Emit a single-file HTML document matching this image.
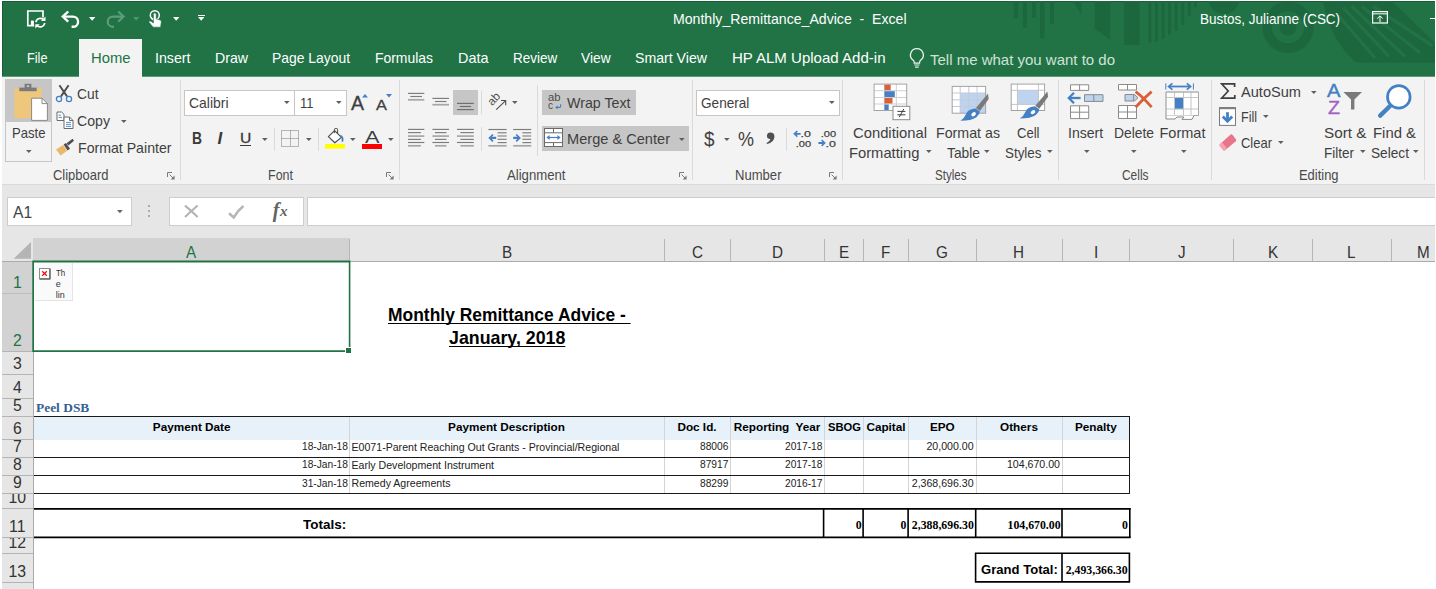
<!DOCTYPE html>
<html><head><meta charset="utf-8"><title>Monthly_Remittance_Advice - Excel</title><style>
html,body{margin:0;padding:0;background:#fff;}
body{width:1436px;height:589px;overflow:hidden;position:relative;font-family:"Liberation Sans",sans-serif;}
.b{position:absolute;display:block;}
.t{position:absolute;white-space:pre;line-height:1;transform-origin:0 0;display:block;}
</style></head>
<body>
<div class="b" style="left:2px;top:1px;width:1433px;height:75px;background:#217346;"></div>
<div class="b" style="left:2px;top:1px;width:1433px;height:1px;background:#1a5c38;"></div>
<div class="b" style="left:2px;top:1px;width:1px;height:75px;background:#1a5c38;"></div>
<div class="b" style="left:79px;top:39px;width:62.5px;height:37px;background:#f3f3f3;"></div>
<div class="b" style="left:2px;top:76px;width:1433px;height:109px;background:#f3f3f3;"></div>
<div class="b" style="left:2px;top:184px;width:1433px;height:1px;background:#dadada;"></div>
<div class="b" style="left:2px;top:76px;width:77px;height:1px;background:#5e987a;"></div>
<div class="b" style="left:142px;top:76px;width:1293px;height:1px;background:#5e987a;"></div>
<div class="b" style="left:2px;top:185px;width:1433px;height:53.3px;background:#e6e6e6;"></div>
<div class="b" style="left:2px;top:239px;width:1433px;height:350px;background:#ffffff;"></div>
<div class="b" style="left:2px;top:238.3px;width:1433px;height:22.7px;background:#e6e6e6;"></div>
<div class="b" style="left:2px;top:239px;width:31.5px;height:350px;background:#e6e6e6;"></div>
<div class="b" style="left:2px;top:261px;width:1433px;height:1px;background:#ababab;"></div>
<div class="b" style="left:33px;top:239px;width:1px;height:350px;background:#ababab;"></div>
<div class="b" style="left:7px;top:197px;width:124.8px;height:28.6px;background:#fff;box-sizing:border-box;border:1px solid #cdcdcd;"></div>
<span class="t" style="top:204.02px;font-family:'Liberation Sans',sans-serif;font-size:16.4px;color:#444;left:12.70px;transform:scaleX(0.9570);">A1</span>
<svg class="b" style="left:117px;top:209.7px;" width="6" height="4" viewBox="0 0 6 4"><path d="M0 0H5.8L2.9 3.3Z" fill="#666"/></svg>
<div class="b" style="left:147.9px;top:204.8px;width:2.6px;height:2.4px;background:#ababab;"></div>
<div class="b" style="left:147.9px;top:209.7px;width:2.6px;height:2.4px;background:#ababab;"></div>
<div class="b" style="left:147.9px;top:214.5px;width:2.6px;height:2.4px;background:#ababab;"></div>
<div class="b" style="left:168.8px;top:197px;width:134.8px;height:28.6px;background:#fff;box-sizing:border-box;border:1px solid #cdcdcd;"></div>
<svg class="b" style="left:183px;top:204px;" width="17" height="15" viewBox="0 0 17 15"><path d="M2 1.6Q8 6.4 14.6 13M14.6 1.6Q8 7.4 2 13" stroke="#b2b2b2" stroke-width="2" fill="none"/></svg>
<svg class="b" style="left:227px;top:204px;" width="19" height="16" viewBox="0 0 19 16"><path d="M2 9.2L6.8 13.4Q10.6 6.6 16.4 2" stroke="#b6b6b6" stroke-width="2.6" fill="none"/></svg>
<span class="t" style="top:199.65px;font-family:'Liberation Serif',serif;font-size:20px;color:#636363;font-weight:700;font-style:italic;left:272.80px;">f</span>
<span class="t" style="top:204.44px;font-family:'Liberation Serif',serif;font-size:15px;color:#636363;font-weight:700;font-style:italic;left:280.00px;">x</span>
<div class="b" style="left:306.9px;top:197px;width:1128.6px;height:28.6px;background:#fff;box-sizing:border-box;border:1px solid #cdcdcd;border-right:none;"></div>
<div class="b" style="left:33px;top:238.3px;width:317px;height:22.7px;background:#d2d2d2;"></div>
<div class="b" style="left:33px;top:260.5px;width:317.4px;height:1.8px;background:#217346;"></div>
<span class="t" style="top:244.12px;font-family:'Liberation Sans',sans-serif;font-size:16.4px;color:#217346;left:186.16px;transform:scaleX(0.9300);">A</span>
<div class="b" style="left:349px;top:239.3px;width:1px;height:21.69999999999999px;background:#b6b6b6;"></div>
<span class="t" style="top:244.12px;font-family:'Liberation Sans',sans-serif;font-size:16.4px;color:#333;left:501.91px;transform:scaleX(0.9300);">B</span>
<div class="b" style="left:664px;top:239.3px;width:1px;height:21.69999999999999px;background:#b6b6b6;"></div>
<span class="t" style="top:244.12px;font-family:'Liberation Sans',sans-serif;font-size:16.4px;color:#333;left:691.99px;transform:scaleX(0.9300);">C</span>
<div class="b" style="left:730px;top:239.3px;width:1px;height:21.69999999999999px;background:#b6b6b6;"></div>
<span class="t" style="top:244.12px;font-family:'Liberation Sans',sans-serif;font-size:16.4px;color:#333;left:771.89px;transform:scaleX(0.9300);">D</span>
<div class="b" style="left:824px;top:239.3px;width:1px;height:21.69999999999999px;background:#b6b6b6;"></div>
<span class="t" style="top:244.12px;font-family:'Liberation Sans',sans-serif;font-size:16.4px;color:#333;left:838.71px;transform:scaleX(0.9300);">E</span>
<div class="b" style="left:863px;top:239.3px;width:1px;height:21.69999999999999px;background:#b6b6b6;"></div>
<span class="t" style="top:244.12px;font-family:'Liberation Sans',sans-serif;font-size:16.4px;color:#333;left:881.24px;transform:scaleX(0.9300);">F</span>
<div class="b" style="left:908px;top:239.3px;width:1px;height:21.69999999999999px;background:#b6b6b6;"></div>
<span class="t" style="top:244.12px;font-family:'Liberation Sans',sans-serif;font-size:16.4px;color:#333;left:936.32px;transform:scaleX(0.9300);">G</span>
<div class="b" style="left:976px;top:239.3px;width:1px;height:21.69999999999999px;background:#b6b6b6;"></div>
<span class="t" style="top:244.12px;font-family:'Liberation Sans',sans-serif;font-size:16.4px;color:#333;left:1013.49px;transform:scaleX(0.9300);">H</span>
<div class="b" style="left:1062px;top:239.3px;width:1px;height:21.69999999999999px;background:#b6b6b6;"></div>
<span class="t" style="top:244.12px;font-family:'Liberation Sans',sans-serif;font-size:16.4px;color:#333;left:1093.73px;transform:scaleX(0.9300);">I</span>
<div class="b" style="left:1129px;top:239.3px;width:1px;height:21.69999999999999px;background:#b6b6b6;"></div>
<span class="t" style="top:244.12px;font-family:'Liberation Sans',sans-serif;font-size:16.4px;color:#333;left:1177.84px;transform:scaleX(0.9300);">J</span>
<div class="b" style="left:1233px;top:239.3px;width:1px;height:21.69999999999999px;background:#b6b6b6;"></div>
<span class="t" style="top:244.12px;font-family:'Liberation Sans',sans-serif;font-size:16.4px;color:#333;left:1267.91px;transform:scaleX(0.9300);">K</span>
<div class="b" style="left:1312px;top:239.3px;width:1px;height:21.69999999999999px;background:#b6b6b6;"></div>
<span class="t" style="top:244.12px;font-family:'Liberation Sans',sans-serif;font-size:16.4px;color:#333;left:1347.46px;transform:scaleX(0.9300);">L</span>
<div class="b" style="left:1391px;top:239.3px;width:1px;height:21.69999999999999px;background:#b6b6b6;"></div>
<span class="t" style="top:244.12px;font-family:'Liberation Sans',sans-serif;font-size:16.4px;color:#333;left:1417.15px;transform:scaleX(0.9300);">M</span>
<svg class="b" style="left:13px;top:241px;" width="19" height="18" viewBox="0 0 19 18"><path d="M18 1V17.8H0.6Z" fill="#b4b4b4"/></svg>
<div class="b" style="left:2px;top:262px;width:31px;height:89px;background:#d2d2d2;"></div>
<div class="b" style="left:2px;top:293px;width:31px;height:1px;background:#bcbcbc;"></div>
<div class="b" style="left:2px;top:351px;width:31px;height:1px;background:#b4b4b4;"></div>
<div class="b" style="left:2px;top:374px;width:31px;height:1px;background:#b4b4b4;"></div>
<div class="b" style="left:2px;top:398px;width:31px;height:1px;background:#b4b4b4;"></div>
<div class="b" style="left:2px;top:416px;width:31px;height:1px;background:#b4b4b4;"></div>
<div class="b" style="left:2px;top:439px;width:31px;height:1px;background:#b4b4b4;"></div>
<div class="b" style="left:2px;top:457px;width:31px;height:1px;background:#b4b4b4;"></div>
<div class="b" style="left:2px;top:475px;width:31px;height:1px;background:#b4b4b4;"></div>
<div class="b" style="left:2px;top:493px;width:31px;height:1px;background:#b4b4b4;"></div>
<div class="b" style="left:2px;top:508px;width:31px;height:1px;background:#b4b4b4;"></div>
<div class="b" style="left:2px;top:537px;width:31px;height:1px;background:#b4b4b4;"></div>
<div class="b" style="left:2px;top:553px;width:31px;height:1px;background:#b4b4b4;"></div>
<div class="b" style="left:2px;top:582px;width:31px;height:1px;background:#b4b4b4;"></div>
<span class="t" style="top:274.93px;font-family:'Liberation Sans',sans-serif;font-size:15.8px;color:#217346;left:13.10px;">1</span>
<span class="t" style="top:332.93px;font-family:'Liberation Sans',sans-serif;font-size:15.8px;color:#217346;left:13.10px;">2</span>
<span class="t" style="top:355.93px;font-family:'Liberation Sans',sans-serif;font-size:15.8px;color:#333;left:13.10px;">3</span>
<span class="t" style="top:379.93px;font-family:'Liberation Sans',sans-serif;font-size:15.8px;color:#333;left:13.10px;">4</span>
<span class="t" style="top:397.93px;font-family:'Liberation Sans',sans-serif;font-size:15.8px;color:#333;left:13.10px;clip-path:inset(1.1px 0 0 0);">5</span>
<span class="t" style="top:420.93px;font-family:'Liberation Sans',sans-serif;font-size:15.8px;color:#333;left:13.10px;">6</span>
<span class="t" style="top:438.93px;font-family:'Liberation Sans',sans-serif;font-size:15.8px;color:#333;left:13.10px;clip-path:inset(1.1px 0 0 0);">7</span>
<span class="t" style="top:456.93px;font-family:'Liberation Sans',sans-serif;font-size:15.8px;color:#333;left:13.10px;clip-path:inset(1.1px 0 0 0);">8</span>
<span class="t" style="top:474.93px;font-family:'Liberation Sans',sans-serif;font-size:15.8px;color:#333;left:13.10px;clip-path:inset(1.1px 0 0 0);">9</span>
<span class="t" style="top:489.93px;font-family:'Liberation Sans',sans-serif;font-size:15.8px;color:#333;left:8.51px;clip-path:inset(4.1px 0 0 0);">10</span>
<span class="t" style="top:518.93px;font-family:'Liberation Sans',sans-serif;font-size:15.8px;color:#333;left:9.10px;">11</span>
<span class="t" style="top:534.93px;font-family:'Liberation Sans',sans-serif;font-size:15.8px;color:#333;left:8.51px;clip-path:inset(3.1px 0 0 0);">12</span>
<span class="t" style="top:563.93px;font-family:'Liberation Sans',sans-serif;font-size:15.8px;color:#333;left:8.51px;">13</span>
<svg class="b" style="left:30px;top:258px;" width="324" height="97" viewBox="30 258 324 97"><path d="M32.3 260.6H350.4V352H32.3ZM34 262.5V350.2H348.8V262.5Z" fill="#217346" fill-rule="evenodd"/></svg>
<div class="b" style="left:345px;top:347px;width:7.2px;height:7px;background:#fff;"></div>
<div class="b" style="left:346px;top:348px;width:5.2px;height:5px;background:#217346;"></div>
<div class="b" style="left:34.5px;top:262.5px;width:37.5px;height:37.5px;background:#fafafa;border-right:1px solid #e4e4e4;border-bottom:1px solid #e4e4e4;"></div>
<svg class="b" style="left:39px;top:268px;" width="12" height="12" viewBox="0 0 12 12"><rect x="0.5" y="0.5" width="10" height="10" fill="#fff" stroke="#8c8c8c"/><path d="M0.5 11.2H11.2V0.5" stroke="#555" fill="none"/><path d="M3.2 3.2L7.8 7.8M7.8 3.2L3.2 7.8" stroke="#e81010" stroke-width="1.25"/></svg>
<span class="t" style="top:268.58px;font-family:'Liberation Sans',sans-serif;font-size:9px;color:#333;left:55.70px;transform:scaleX(0.8844);">Th</span>
<span class="t" style="top:279.98px;font-family:'Liberation Sans',sans-serif;font-size:9px;color:#333;left:55.70px;">e</span>
<span class="t" style="top:291.18px;font-family:'Liberation Sans',sans-serif;font-size:9px;color:#333;left:55.70px;">lin</span>
<span class="t" style="top:307.10px;font-family:'Liberation Sans',sans-serif;font-size:17.6px;color:#000;font-weight:700;text-decoration:underline;left:388.10px;transform:scaleX(0.9913);text-decoration-skip-ink:none;text-underline-offset:2.4px;text-decoration-thickness:1.3px;">Monthly Remittance Advice - </span>
<span class="t" style="top:330.23px;font-family:'Liberation Sans',sans-serif;font-size:17.8px;color:#000;font-weight:700;text-decoration:underline;left:449.00px;text-decoration-skip-ink:none;text-underline-offset:2.4px;text-decoration-thickness:1.3px;">January, 2018</span>
<span class="t" style="top:401.50px;font-family:'Liberation Serif',serif;font-size:12.3px;color:#365f91;font-weight:700;left:36.00px;transform:scaleX(1.0912);">Peel DSB</span>
<div class="b" style="left:34px;top:417px;width:1094.6px;height:22.5px;background:#e7f1fa;"></div>
<div class="b" style="left:349px;top:417px;width:1px;height:76px;background:#d4d4d4;"></div>
<div class="b" style="left:664px;top:417px;width:1px;height:76px;background:#d4d4d4;"></div>
<div class="b" style="left:730px;top:417px;width:1px;height:76px;background:#d4d4d4;"></div>
<div class="b" style="left:824px;top:417px;width:1px;height:76px;background:#d4d4d4;"></div>
<div class="b" style="left:863px;top:417px;width:1px;height:76px;background:#d4d4d4;"></div>
<div class="b" style="left:908px;top:417px;width:1px;height:76px;background:#d4d4d4;"></div>
<div class="b" style="left:976px;top:417px;width:1px;height:76px;background:#d4d4d4;"></div>
<div class="b" style="left:1062px;top:417px;width:1px;height:76px;background:#d4d4d4;"></div>
<div class="b" style="left:34px;top:416px;width:1096px;height:1px;background:#1a1a1a;"></div>
<div class="b" style="left:34px;top:457px;width:1096px;height:1px;background:#1a1a1a;"></div>
<div class="b" style="left:34px;top:475px;width:1096px;height:1px;background:#1a1a1a;"></div>
<div class="b" style="left:34px;top:493px;width:1096px;height:1px;background:#1a1a1a;"></div>
<div class="b" style="left:1129px;top:416px;width:1px;height:78px;background:#1a1a1a;"></div>
<span class="t" style="top:421.45px;font-family:'Liberation Sans',sans-serif;font-size:11.75px;color:#000;font-weight:700;left:152.84px;">Payment Date</span>
<span class="t" style="top:421.45px;font-family:'Liberation Sans',sans-serif;font-size:11.75px;color:#000;font-weight:700;left:448.05px;">Payment Description</span>
<span class="t" style="top:421.45px;font-family:'Liberation Sans',sans-serif;font-size:11.75px;color:#000;font-weight:700;left:677.41px;">Doc Id.</span>
<span class="t" style="top:421.45px;font-family:'Liberation Sans',sans-serif;font-size:11.75px;color:#000;font-weight:700;left:733.78px;">Reporting  Year</span>
<span class="t" style="top:421.45px;font-family:'Liberation Sans',sans-serif;font-size:11.75px;color:#000;font-weight:700;left:827.50px;transform:scaleX(0.9535);">SBOG</span>
<span class="t" style="top:421.45px;font-family:'Liberation Sans',sans-serif;font-size:11.75px;color:#000;font-weight:700;left:866.41px;">Capital</span>
<span class="t" style="top:421.45px;font-family:'Liberation Sans',sans-serif;font-size:11.75px;color:#000;font-weight:700;left:929.89px;">EPO</span>
<span class="t" style="top:421.45px;font-family:'Liberation Sans',sans-serif;font-size:11.75px;color:#000;font-weight:700;left:1000.06px;">Others</span>
<span class="t" style="top:421.45px;font-family:'Liberation Sans',sans-serif;font-size:11.75px;color:#000;font-weight:700;left:1074.90px;">Penalty</span>
<span class="t" style="top:441.33px;font-family:'Liberation Sans',sans-serif;font-size:10.6px;color:#222;left:301.61px;transform:scaleX(0.9620);">18-Jan-18</span>
<span class="t" style="top:441.53px;font-family:'Liberation Sans',sans-serif;font-size:10.6px;color:#222;left:351.50px;">E0071-Parent Reaching Out Grants - Provincial/Regional</span>
<span class="t" style="top:441.33px;font-family:'Liberation Sans',sans-serif;font-size:10.6px;color:#222;left:699.95px;transform:scaleX(0.9620);">88006</span>
<span class="t" style="top:441.33px;font-family:'Liberation Sans',sans-serif;font-size:10.6px;color:#222;left:784.59px;transform:scaleX(0.9620);">2017-18</span>
<span class="t" style="top:459.43px;font-family:'Liberation Sans',sans-serif;font-size:10.6px;color:#222;left:301.61px;transform:scaleX(0.9620);">18-Jan-18</span>
<span class="t" style="top:459.63px;font-family:'Liberation Sans',sans-serif;font-size:10.6px;color:#222;left:351.50px;">Early Development Instrument</span>
<span class="t" style="top:459.43px;font-family:'Liberation Sans',sans-serif;font-size:10.6px;color:#222;left:699.95px;transform:scaleX(0.9620);">87917</span>
<span class="t" style="top:459.43px;font-family:'Liberation Sans',sans-serif;font-size:10.6px;color:#222;left:784.59px;transform:scaleX(0.9620);">2017-18</span>
<span class="t" style="top:477.63px;font-family:'Liberation Sans',sans-serif;font-size:10.6px;color:#222;left:301.61px;transform:scaleX(0.9620);">31-Jan-18</span>
<span class="t" style="top:477.83px;font-family:'Liberation Sans',sans-serif;font-size:10.6px;color:#222;left:351.50px;">Remedy Agreements</span>
<span class="t" style="top:477.63px;font-family:'Liberation Sans',sans-serif;font-size:10.6px;color:#222;left:699.95px;transform:scaleX(0.9620);">88299</span>
<span class="t" style="top:477.63px;font-family:'Liberation Sans',sans-serif;font-size:10.6px;color:#222;left:784.59px;transform:scaleX(0.9620);">2016-17</span>
<span class="t" style="top:441.33px;font-family:'Liberation Sans',sans-serif;font-size:10.6px;color:#222;left:926.46px;">20,000.00</span>
<span class="t" style="top:459.43px;font-family:'Liberation Sans',sans-serif;font-size:10.6px;color:#222;left:1006.97px;">104,670.00</span>
<span class="t" style="top:477.63px;font-family:'Liberation Sans',sans-serif;font-size:10.6px;color:#222;left:911.74px;">2,368,696.30</span>
<svg class="b" style="left:30px;top:505px;" width="1104" height="36" viewBox="30 505 1104 36"><path d="M34 507.9H1130.6V509.8H34ZM34 536.5H1130.6V538.3H34Z" fill="#000"/><rect x="822.8" y="508" width="1.6" height="30" fill="#000"/><rect x="862.3" y="508" width="1.6" height="30" fill="#000"/><rect x="907.3" y="508" width="1.6" height="30" fill="#000"/><rect x="974.9" y="508" width="1.6" height="30" fill="#000"/><rect x="1061.2" y="508" width="1.6" height="30" fill="#000"/><rect x="1129.0" y="508" width="1.6" height="30" fill="#000"/></svg>
<span class="t" style="top:517.86px;font-family:'Liberation Sans',sans-serif;font-size:13.4px;color:#000;font-weight:700;left:303.00px;transform:scaleX(1.0068);">Totals:</span>
<span class="t" style="top:520.22px;font-family:'Liberation Serif',serif;font-size:11.8px;color:#000;font-weight:700;left:855.69px;">0</span>
<span class="t" style="top:520.22px;font-family:'Liberation Serif',serif;font-size:11.8px;color:#000;font-weight:700;left:900.49px;">0</span>
<span class="t" style="top:520.22px;font-family:'Liberation Serif',serif;font-size:11.8px;color:#000;font-weight:700;left:911.86px;">2,388,696.30</span>
<span class="t" style="top:520.22px;font-family:'Liberation Serif',serif;font-size:11.8px;color:#000;font-weight:700;left:1007.51px;">104,670.00</span>
<span class="t" style="top:520.22px;font-family:'Liberation Serif',serif;font-size:11.8px;color:#000;font-weight:700;left:1122.09px;">0</span>
<svg class="b" style="left:970px;top:548px;" width="166" height="40" viewBox="970 548 166 40"><path d="M974.8 552.4H1130.2V582.7H974.8ZM976.4 554V581.1H1061.2V554ZM1062.8 554V581.1H1128.6V554Z" fill="#000" fill-rule="evenodd"/></svg>
<span class="t" style="top:562.57px;font-family:'Liberation Sans',sans-serif;font-size:13.5px;color:#000;font-weight:700;left:981.00px;transform:scaleX(0.9691);">Grand Total:</span>
<span class="t" style="top:564.52px;font-family:'Liberation Serif',serif;font-size:11.8px;color:#000;font-weight:700;left:1065.66px;">2,493,366.30</span>
<svg class="b" style="left:2px;top:1px;" width="1433" height="62" viewBox="2 1 1433 62"><g fill="#1d673e"><rect x="1013.7" y="1" width="4.5" height="17.4"/><rect x="1022.8" y="1" width="4.2" height="26.6"/><rect x="1032" y="1" width="4" height="17.0"/><rect x="1040" y="1" width="4.5" height="37.4"/><rect x="1050" y="1" width="4" height="23.2"/><path d="M1073 1H1081.5V15Z"/><path d="M1094.7 1H1110.3V40L1094.7 28.4Z"/><path d="M1124 1H1139.6V45H1124Z"/><rect x="1148.4" y="1" width="2.9" height="42.1"/><rect x="1155" y="1" width="2.9" height="40.7"/><rect x="1161.6" y="1" width="2.9" height="37.8"/><rect x="1168.2" y="1" width="2.9" height="34.1"/><rect x="1174.7" y="1" width="2.9" height="29.7"/><rect x="1181.3" y="1" width="2.9" height="23.9"/><rect x="1187.9" y="1" width="2.9" height="14.4"/><rect x="1194" y="1" width="2.9" height="6.3"/><circle cx="1224" cy="-2" r="16"/><circle cx="1288" cy="27.3" r="8.3"/></g><circle cx="1288" cy="27.3" r="20.8" fill="none" stroke="#1d673e" stroke-width="9.6"/><path d="M1323 1Q1330 40 1356 62.5H1435V43L1392 1Z" fill="#1d673e"/><g stroke="#217346" stroke-width="3.2" fill="none"><path d="M1343 7.5L1389 56.5"/><path d="M1351.6 6.4L1405 56.5"/><path d="M1362 6.4L1420 53"/><path d="M1373 6.4L1432.6 45.8"/><path d="M1337 14L1375 58"/></g></svg>
<span class="t" style="top:12.13px;font-family:'Liberation Sans',sans-serif;font-size:14.5px;color:#ffffff;left:673.00px;transform:scaleX(0.9727);">Monthly_Remittance_Advice  -  Excel</span>
<span class="t" style="top:12.13px;font-family:'Liberation Sans',sans-serif;font-size:14.5px;color:#ffffff;left:1199.90px;transform:scaleX(0.9296);">Bustos, Julianne (CSC)</span>
<span class="t" style="top:50.93px;font-family:'Liberation Sans',sans-serif;font-size:14.5px;color:#fff;left:27.00px;transform:scaleX(0.8770);">File</span>
<span class="t" style="top:50.93px;font-family:'Liberation Sans',sans-serif;font-size:14.5px;color:#217346;left:90.50px;transform:scaleX(1.0210);">Home</span>
<span class="t" style="top:50.93px;font-family:'Liberation Sans',sans-serif;font-size:14.5px;color:#fff;left:154.50px;transform:scaleX(0.9789);">Insert</span>
<span class="t" style="top:50.93px;font-family:'Liberation Sans',sans-serif;font-size:14.5px;color:#fff;left:214.50px;transform:scaleX(0.9751);">Draw</span>
<span class="t" style="top:50.93px;font-family:'Liberation Sans',sans-serif;font-size:14.5px;color:#fff;left:272.00px;transform:scaleX(0.9578);">Page Layout</span>
<span class="t" style="top:50.93px;font-family:'Liberation Sans',sans-serif;font-size:14.5px;color:#fff;left:375.00px;transform:scaleX(0.9597);">Formulas</span>
<span class="t" style="top:50.93px;font-family:'Liberation Sans',sans-serif;font-size:14.5px;color:#fff;left:458.00px;transform:scaleX(0.9954);">Data</span>
<span class="t" style="top:50.93px;font-family:'Liberation Sans',sans-serif;font-size:14.5px;color:#fff;left:512.50px;transform:scaleX(0.9296);">Review</span>
<span class="t" style="top:50.93px;font-family:'Liberation Sans',sans-serif;font-size:14.5px;color:#fff;left:580.70px;transform:scaleX(0.9496);">View</span>
<span class="t" style="top:50.93px;font-family:'Liberation Sans',sans-serif;font-size:14.5px;color:#fff;left:635.00px;transform:scaleX(0.9746);">Smart View</span>
<span class="t" style="top:50.93px;font-family:'Liberation Sans',sans-serif;font-size:14.5px;color:#fff;left:732.00px;transform:scaleX(1.0368);">HP ALM Upload Add-in</span>
<span class="t" style="top:52.93px;font-family:'Liberation Sans',sans-serif;font-size:14.5px;color:#cfe2d6;left:930.00px;transform:scaleX(1.0339);">Tell me what you want to do</span>
<svg class="b" style="left:908px;top:47px;" width="18" height="22" viewBox="0 0 18 22"><path d="M8.9 1.6a6.4 6.4 0 0 0-3.9 11.5c1 .9 1.3 1.8 1.3 3h5.2c0-1.2 .3-2.1 1.3-3a6.4 6.4 0 0 0-3.9-11.5z" fill="none" stroke="#eaf3ee" stroke-width="1.3"/><path d="M6.3 18h5.2M7.1 20.2h3.6" stroke="#eaf3ee" stroke-width="1.2"/></svg>
<svg class="b" style="left:1371.8px;top:11.3px;" width="17" height="13" viewBox="0 0 17 13"><rect x="0.6" y="0.6" width="14.8" height="11.4" fill="none" stroke="#fff" stroke-width="1.2"/><path d="M0.6 2.8H15.4" stroke="#fff" stroke-width="1"/><path d="M8 11V5M5.2 7.6L8 4.8L10.8 7.6" stroke="#fff" stroke-width="1" fill="none"/></svg>
<div class="b" style="left:1429.5px;top:18px;width:5.5px;height:1px;background:#fff;"></div>
<svg class="b" style="left:26px;top:9px;" width="22" height="20" viewBox="0 0 22 20"><path d="M17 8.6V2H1.8V16.7H8.2" fill="none" stroke="#fff" stroke-width="1.7"/><rect x="4.9" y="11.6" width="3" height="5.4" fill="#fff"/>
<path d="M9.9 13.2a4.5 4.5 0 0 1 7.9-2.2M18.7 14a4.5 4.5 0 0 1-7.9 2.3" fill="none" stroke="#fff" stroke-width="1.7"/><path d="M19.5 7.4V12H14.9Z" fill="#fff"/><path d="M9.3 19.6V15.2H13.7Z" fill="#fff"/></svg>
<svg class="b" style="left:61px;top:10px;" width="20" height="19" viewBox="0 0 20 19"><path d="M2 6.6H12a5.1 5.1 0 0 1 0 10.2H10.6" fill="none" stroke="#fff" stroke-width="2.4"/><path d="M7.2 1.5L1.8 6.6L7.2 11.7" fill="none" stroke="#fff" stroke-width="2.4"/></svg>
<svg class="b" style="left:88.8px;top:16.6px;" width="7" height="4" viewBox="0 0 7 4"><path d="M0 0H6.4L3.2 3.7Z" fill="#fff"/></svg>
<svg class="b" style="left:105px;top:10px;" width="21" height="19" viewBox="0 0 21 19"><path d="M18.4 6.6H7.8a5.1 5.1 0 0 0 0 10.2H9" fill="none" stroke="#5c9c7b" stroke-width="2.2"/><path d="M13.2 1.5L18.6 6.6L13.2 11.7" fill="none" stroke="#5c9c7b" stroke-width="2.2"/></svg>
<svg class="b" style="left:133.2px;top:16.6px;" width="7" height="4" viewBox="0 0 7 4"><path d="M0 0H6.4L3.2 3.7Z" fill="#4f9370"/></svg>
<svg class="b" style="left:147px;top:8px;" width="16" height="21" viewBox="0 0 16 21"><circle cx="7.8" cy="7.2" r="4.5" fill="none" stroke="#fff" stroke-width="1.5"/>
<path d="M6.4 6.3a1.4 1.4 0 0 1 2.8 0V10.9L13.2 12Q14.5 12.4 14.3 13.8L13.6 19.2H6.2L2.2 14.5Q1.5 13.4 2.6 13Q3.8 12.7 6.4 15Z" fill="#fff" stroke="#217346" stroke-width="0.6"/></svg>
<svg class="b" style="left:172.6px;top:16.6px;" width="7" height="4" viewBox="0 0 7 4"><path d="M0 0H6.4L3.2 3.7Z" fill="#fff"/></svg>
<div class="b" style="left:198.4px;top:14.7px;width:6.2px;height:1.2px;background:#fff;"></div>
<svg class="b" style="left:198.3px;top:17px;" width="7" height="4" viewBox="0 0 7 4"><path d="M0 0H6.4L3.2 3.7Z" fill="#fff"/></svg>
<div class="b" style="left:4.5px;top:79px;width:47.5px;height:43px;background:#c6c6c6;"></div>
<div class="b" style="left:4.5px;top:122px;width:47.5px;height:39.5px;background:#f3f3f3;box-sizing:border-box;border:1px solid #c6c6c6;border-top:none;"></div>
<svg class="b" style="left:13px;top:83px;" width="36" height="40" viewBox="0 0 36 40"><rect x="1.3" y="4.9" width="27.4" height="30.2" rx="1.6" fill="#eec77d"/>
<rect x="6.3" y="4.6" width="17.4" height="3.6" fill="#7a7a7a"/><rect x="11.6" y="0.8" width="6.8" height="4.2" fill="#7a7a7a"/><rect x="13.9" y="2.2" width="2.3" height="1.9" fill="#c6c6c6"/>
<path d="M18.6 15.2H29L34.4 20.6V37.4H18.6Z" fill="#fff" stroke="#8a8a8a" stroke-width="1"/><path d="M29 15.2V20.6H34.4" fill="none" stroke="#8a8a8a" stroke-width="1"/></svg>
<span class="t" style="top:126.23px;font-family:'Liberation Sans',sans-serif;font-size:14.5px;color:#3f3f3f;left:11.50px;transform:scaleX(0.9031);">Paste</span>
<svg class="b" style="left:26px;top:150px;" width="6" height="4" viewBox="0 0 6 4"><path d="M0 0H5.6L2.8 3.1Z" fill="#5e5e5e"/></svg>
<svg class="b" style="left:55px;top:84px;" width="19" height="19" viewBox="0 0 19 19"><path d="M4.4 1.2L12 12.4M13.6 1.2L6 12.4" stroke="#4d4d4d" stroke-width="1.9" fill="none"/>
<circle cx="4" cy="15" r="2.6" fill="none" stroke="#4480c4" stroke-width="1.3"/><circle cx="14" cy="15" r="2.6" fill="none" stroke="#4480c4" stroke-width="1.3"/></svg>
<span class="t" style="top:86.73px;font-family:'Liberation Sans',sans-serif;font-size:14.5px;color:#3f3f3f;left:77.00px;transform:scaleX(0.9522);">Cut</span>
<svg class="b" style="left:55.5px;top:111px;" width="19" height="19" viewBox="0 0 19 19"><path d="M1 1H5.6L8 3.4V9.5H1Z" fill="#fff" stroke="#6a6a6a" stroke-width="1"/>
<path d="M8 6H13.5L17 9.5V17.5H8Z" fill="#fff" stroke="#6a6a6a" stroke-width="1"/><path d="M13.5 6V9.5H17" fill="none" stroke="#6a6a6a" stroke-width="1"/>
<path d="M2.6 4.2H5M2.6 6.4H6M10 11.4H15M10 13.4H15M10 15.4H15" stroke="#4480c4" stroke-width="0.9"/></svg>
<span class="t" style="top:114.23px;font-family:'Liberation Sans',sans-serif;font-size:14.5px;color:#3f3f3f;left:77.00px;transform:scaleX(0.9746);">Copy</span>
<svg class="b" style="left:120.5px;top:119.5px;" width="6" height="4" viewBox="0 0 6 4"><path d="M0 0H5.6L2.8 3.1Z" fill="#5e5e5e"/></svg>
<svg class="b" style="left:55px;top:138px;" width="20" height="19" viewBox="0 0 20 19"><path d="M1 11.5L8.2 7L12.2 12.8L5.6 17.6Z" fill="#e9b96a"/><path d="M8.6 6.6L11 5L15 10.8L12.6 12.4Z" fill="#4d4d4d"/>
<path d="M11.6 5.2L17.6 0.8L19 2.8L13.4 7.6Z" fill="#4d4d4d"/></svg>
<span class="t" style="top:141.23px;font-family:'Liberation Sans',sans-serif;font-size:14.5px;color:#3f3f3f;left:77.50px;transform:scaleX(0.9749);">Format Painter</span>
<span class="t" style="top:167.73px;font-family:'Liberation Sans',sans-serif;font-size:14.5px;color:#4a4a4a;left:53.00px;transform:scaleX(0.8940);">Clipboard</span>
<svg class="b" style="left:167px;top:171.5px;" width="8" height="8" viewBox="0 0 8 8"><path d="M0.5 5V0.5H5" fill="none" stroke="#7a7a7a" stroke-width="1"/><path d="M2.6 2.6L6.6 6.6" stroke="#7a7a7a" stroke-width="1"/><path d="M7.6 3.6V7.6H3.6Z" fill="#7a7a7a"/></svg>
<div class="b" style="left:179.7px;top:80px;width:1px;height:100px;background:#dadada;"></div>
<div class="b" style="left:184px;top:89.5px;width:110.5px;height:26px;background:#fff;box-sizing:border-box;border:1px solid #c6c6c6;"></div>
<div class="b" style="left:293.5px;top:89.5px;width:53.2px;height:26px;background:#fff;box-sizing:border-box;border:1px solid #c6c6c6;"></div>
<span class="t" style="top:96.13px;font-family:'Liberation Sans',sans-serif;font-size:14.5px;color:#3f3f3f;left:188.50px;transform:scaleX(0.9612);">Calibri</span>
<svg class="b" style="left:284px;top:100.5px;" width="6" height="4" viewBox="0 0 6 4"><path d="M0 0H5.6L2.8 3.1Z" fill="#5e5e5e"/></svg>
<span class="t" style="top:96.13px;font-family:'Liberation Sans',sans-serif;font-size:14.5px;color:#3f3f3f;left:299.50px;transform:scaleX(0.8963);">11</span>
<svg class="b" style="left:336px;top:100.5px;" width="6" height="4" viewBox="0 0 6 4"><path d="M0 0H5.6L2.8 3.1Z" fill="#5e5e5e"/></svg>
<span class="t" style="top:93.07px;font-family:'Liberation Sans',sans-serif;font-size:20px;color:#3f3f3f;left:351.30px;transform:scaleX(0.9742);-webkit-text-stroke:0.3px #3f3f3f;">A</span>
<svg class="b" style="left:361.5px;top:93.5px;" width="7" height="4" viewBox="0 0 7 4"><path d="M0 3.6L3 0L6 3.6Z" fill="#4480c4"/></svg>
<span class="t" style="top:98.23px;font-family:'Liberation Sans',sans-serif;font-size:14.5px;color:#3f3f3f;left:376.30px;transform:scaleX(1.1270);-webkit-text-stroke:0.3px #3f3f3f;">A</span>
<svg class="b" style="left:386px;top:93.8px;" width="7" height="4" viewBox="0 0 7 4"><path d="M0 0H6L3 3.4Z" fill="#4480c4"/></svg>
<span class="t" style="top:130.03px;font-family:'Liberation Sans',sans-serif;font-size:16.5px;color:#3a3a3a;font-weight:700;left:191.50px;transform:scaleX(0.8388);">B</span>
<span class="t" style="top:129.61px;font-family:'Liberation Sans',sans-serif;font-size:17px;color:#3a3a3a;font-weight:700;font-style:italic;left:217.60px;">I</span>
<span class="t" style="top:130.48px;font-family:'Liberation Sans',sans-serif;font-size:15.5px;color:#3a3a3a;left:239.70px;transform:scaleX(1.0086);-webkit-text-stroke:0.35px #3a3a3a;">U</span>
<div class="b" style="left:240px;top:145.2px;width:11px;height:1.3px;background:#3a3a3a;"></div>
<svg class="b" style="left:261.5px;top:138px;" width="6" height="4" viewBox="0 0 6 4"><path d="M0 0H5.6L2.8 3.1Z" fill="#5e5e5e"/></svg>
<div class="b" style="left:273.8px;top:127.5px;width:1px;height:23.0px;background:#dadada;"></div>
<svg class="b" style="left:281px;top:130px;" width="18" height="18" viewBox="0 0 18 18"><path d="M0.5 0.5H17.5V16.5H0.5ZM9.5 0.5V16.5M0.5 8.5H17.5" fill="none" stroke="#777" stroke-width="1" stroke-dasharray="1 1"/></svg>
<svg class="b" style="left:306px;top:138px;" width="6" height="4" viewBox="0 0 6 4"><path d="M0 0H5.6L2.8 3.1Z" fill="#5e5e5e"/></svg>
<div class="b" style="left:317.8px;top:127.5px;width:1px;height:23.0px;background:#dadada;"></div>
<svg class="b" style="left:325px;top:128px;" width="21" height="21" viewBox="0 0 21 21"><rect x="0" y="16" width="20" height="4.6" fill="#ffff00"/>
<path d="M9.6 2.6L16.4 9.4L9.8 14.8L3.4 8.6Z" fill="#fff" stroke="#4d4d4d" stroke-width="1.2" stroke-linejoin="round"/>
<path d="M9.4 5.2V1.8a1.6 1.6 0 0 1 3.2 0V5.6" fill="none" stroke="#4d4d4d" stroke-width="1"/>
<path d="M15.4 7.4Q18.6 9.6 17.2 13.6" fill="none" stroke="#4480c4" stroke-width="1.8"/></svg>
<svg class="b" style="left:350px;top:138px;" width="6" height="4" viewBox="0 0 6 4"><path d="M0 0H5.6L2.8 3.1Z" fill="#5e5e5e"/></svg>
<span class="t" style="top:129.03px;font-family:'Liberation Sans',sans-serif;font-size:16.5px;color:#3f3f3f;left:364.50px;transform:scaleX(1.3163);">A</span>
<div class="b" style="left:362px;top:144px;width:20px;height:4.6px;background:#ff0000;"></div>
<svg class="b" style="left:387.5px;top:138px;" width="6" height="4" viewBox="0 0 6 4"><path d="M0 0H5.6L2.8 3.1Z" fill="#5e5e5e"/></svg>
<span class="t" style="top:167.73px;font-family:'Liberation Sans',sans-serif;font-size:14.5px;color:#4a4a4a;left:267.50px;transform:scaleX(0.8616);">Font</span>
<svg class="b" style="left:386px;top:171.5px;" width="8" height="8" viewBox="0 0 8 8"><path d="M0.5 5V0.5H5" fill="none" stroke="#7a7a7a" stroke-width="1"/><path d="M2.6 2.6L6.6 6.6" stroke="#7a7a7a" stroke-width="1"/><path d="M7.6 3.6V7.6H3.6Z" fill="#7a7a7a"/></svg>
<div class="b" style="left:399.2px;top:80px;width:1px;height:100px;background:#dadada;"></div>
<svg class="b" style="left:407px;top:91px;" width="20" height="12" viewBox="407 91 20 12"><rect x="408.00" y="92.83" width="16.3" height="1.15" fill="#7c7c7c"/><rect x="410.30" y="95.92" width="11.7" height="1.15" fill="#7c7c7c"/><rect x="408.00" y="98.95" width="16.3" height="1.7" fill="#a6a6a6"/></svg>
<svg class="b" style="left:431px;top:96px;" width="20" height="12" viewBox="431 96 20 12"><rect x="432.40" y="97.83" width="16.6" height="1.15" fill="#7c7c7c"/><rect x="434.95" y="100.92" width="11.5" height="1.15" fill="#7c7c7c"/><rect x="432.40" y="103.85" width="16.6" height="1.7" fill="#a6a6a6"/></svg>
<div class="b" style="left:453px;top:90px;width:25px;height:25px;background:#c6c6c6;"></div>
<svg class="b" style="left:456px;top:101px;" width="20" height="12" viewBox="456 101 20 12"><rect x="457.00" y="102.83" width="16.8" height="1.15" fill="#6e6e6e"/><rect x="459.70" y="105.92" width="11.4" height="1.15" fill="#6e6e6e"/><rect x="457.00" y="109.02" width="16.8" height="1.15" fill="#6e6e6e"/></svg>
<div class="b" style="left:480.8px;top:91px;width:1px;height:23px;background:#dadada;"></div>
<svg class="b" style="left:488px;top:91px;" width="22" height="22" viewBox="0 0 22 22"><text x="0" y="0" font-family="Liberation Sans, sans-serif" font-size="11.6" fill="#4d4d4d" text-anchor="middle" transform="translate(8.6 10.6) rotate(-47)">ab</text>
<path d="M8.2 18.6L17.4 9.8" stroke="#4d4d4d" stroke-width="1.1"/><path d="M13 9.5H17.7V14.2" fill="none" stroke="#4d4d4d" stroke-width="1.1"/></svg>
<svg class="b" style="left:511.5px;top:101px;" width="6" height="4" viewBox="0 0 6 4"><path d="M0 0H5.6L2.8 3.1Z" fill="#5e5e5e"/></svg>
<div class="b" style="left:537.3px;top:85px;width:1px;height:71px;background:#dadada;"></div>
<svg class="b" style="left:407px;top:127px;" width="20" height="22" viewBox="407 127 20 22"><rect x="408.00" y="128.83" width="16.3" height="1.15" fill="#7c7c7c"/><rect x="408.00" y="132.03" width="12.9" height="1.15" fill="#7c7c7c"/><rect x="408.00" y="135.25" width="16.3" height="1.7" fill="#a6a6a6"/><rect x="408.00" y="138.83" width="12.9" height="1.15" fill="#7c7c7c"/><rect x="408.00" y="141.93" width="16.3" height="1.15" fill="#7c7c7c"/><rect x="408.00" y="144.95" width="12.9" height="1.7" fill="#a6a6a6"/></svg>
<svg class="b" style="left:431px;top:127px;" width="20" height="22" viewBox="431 127 20 22"><rect x="432.40" y="128.83" width="16.6" height="1.15" fill="#7c7c7c"/><rect x="434.95" y="132.03" width="11.5" height="1.15" fill="#7c7c7c"/><rect x="432.40" y="135.25" width="16.6" height="1.7" fill="#a6a6a6"/><rect x="434.95" y="138.83" width="11.5" height="1.15" fill="#7c7c7c"/><rect x="432.40" y="141.93" width="16.6" height="1.15" fill="#7c7c7c"/><rect x="434.95" y="144.95" width="11.5" height="1.7" fill="#a6a6a6"/></svg>
<svg class="b" style="left:456px;top:127px;" width="20" height="22" viewBox="456 127 20 22"><rect x="457.00" y="128.83" width="16.8" height="1.15" fill="#7c7c7c"/><rect x="460.40" y="132.03" width="13.4" height="1.15" fill="#7c7c7c"/><rect x="457.00" y="135.25" width="16.8" height="1.7" fill="#a6a6a6"/><rect x="460.40" y="138.83" width="13.4" height="1.15" fill="#7c7c7c"/><rect x="457.00" y="141.93" width="16.8" height="1.15" fill="#7c7c7c"/><rect x="460.40" y="144.95" width="13.4" height="1.7" fill="#a6a6a6"/></svg>
<div class="b" style="left:480.8px;top:127px;width:1px;height:23.5px;background:#dadada;"></div>
<svg class="b" style="left:487px;top:127px;" width="22" height="22" viewBox="487 127 22 22"><rect x="488.40" y="128.93" width="18.2" height="1.15" fill="#7c7c7c"/><rect x="488.40" y="144.95" width="18.2" height="1.7" fill="#a6a6a6"/></svg>
<svg class="b" style="left:496px;top:130px;" width="13" height="16" viewBox="496 130 13 16"><rect x="497.60" y="132.23" width="9" height="1.15" fill="#7c7c7c"/><rect x="497.60" y="135.15" width="9" height="1.7" fill="#a6a6a6"/><rect x="497.60" y="138.73" width="9" height="1.15" fill="#7c7c7c"/><rect x="497.60" y="142.03" width="9" height="1.15" fill="#7c7c7c"/></svg>
<svg class="b" style="left:488px;top:133px;" width="9" height="10" viewBox="0 0 9 10"><path d="M0.3 4.9L4.4 0.9L5.6 2.1L3.9 3.8H8.2V6H3.9L5.6 7.7L4.4 8.9Z" fill="#4480c4"/></svg>
<svg class="b" style="left:512px;top:127px;" width="22" height="22" viewBox="512 127 22 22"><rect x="513.20" y="128.93" width="18" height="1.15" fill="#7c7c7c"/><rect x="513.20" y="144.95" width="18" height="1.7" fill="#a6a6a6"/></svg>
<svg class="b" style="left:521px;top:130px;" width="12" height="16" viewBox="521 130 12 16"><rect x="522.40" y="132.23" width="8.8" height="1.15" fill="#7c7c7c"/><rect x="522.40" y="135.15" width="8.8" height="1.7" fill="#a6a6a6"/><rect x="522.40" y="138.73" width="8.8" height="1.15" fill="#7c7c7c"/><rect x="522.40" y="142.03" width="8.8" height="1.15" fill="#7c7c7c"/></svg>
<svg class="b" style="left:513px;top:133px;" width="9" height="10" viewBox="0 0 9 10"><path d="M7.9 4.9L3.8 0.9L2.6 2.1L4.3 3.8H0.2V6H4.3L2.6 7.7L3.8 8.9Z" fill="#4480c4"/></svg>
<div class="b" style="left:542px;top:89.5px;width:94px;height:25.5px;background:#c6c6c6;"></div>
<span class="t" style="top:92.53px;font-family:'Liberation Sans',sans-serif;font-size:10px;color:#4d4d4d;left:547.50px;transform:scaleX(1.1236);">ab</span>
<span class="t" style="top:101.03px;font-family:'Liberation Sans',sans-serif;font-size:10px;color:#4d4d4d;left:548.00px;">c</span>
<svg class="b" style="left:555px;top:104px;" width="7" height="6" viewBox="0 0 7 6"><path d="M5.6 0.3V2.2a1.2 1.2 0 0 1-1.2 1.2H1.8" fill="none" stroke="#4480c4" stroke-width="1.1"/><path d="M0.2 3.4L2.6 1.5V5.3Z" fill="#4480c4"/></svg>
<span class="t" style="top:96.23px;font-family:'Liberation Sans',sans-serif;font-size:14.5px;color:#3f3f3f;left:567.00px;transform:scaleX(0.9807);">Wrap Text</span>
<div class="b" style="left:542px;top:126px;width:147px;height:25px;background:#c6c6c6;"></div>
<svg class="b" style="left:544px;top:128px;" width="20" height="20" viewBox="0 0 20 20"><rect x="0.5" y="0.5" width="18" height="18" fill="#fff" stroke="#6a6a6a"/><path d="M0.5 4.8H18.5M0.5 14.6H18.5M9.5 0.5V4.8M9.5 14.6V18.5" stroke="#6a6a6a" fill="none"/>
<path d="M3.4 9.5H15.6" stroke="#4480c4" stroke-width="1.2"/><path d="M2.4 9.5L5.6 7V12Z M16.6 9.5L13.4 7V12Z" fill="#4480c4"/></svg>
<span class="t" style="top:132.23px;font-family:'Liberation Sans',sans-serif;font-size:14.5px;color:#3f3f3f;left:567.00px;transform:scaleX(1.0063);">Merge &amp; Center</span>
<svg class="b" style="left:679px;top:137.5px;" width="6" height="4" viewBox="0 0 6 4"><path d="M0 0H5.6L2.8 3.1Z" fill="#5e5e5e"/></svg>
<span class="t" style="top:167.73px;font-family:'Liberation Sans',sans-serif;font-size:14.5px;color:#4a4a4a;left:507.00px;transform:scaleX(0.9072);">Alignment</span>
<svg class="b" style="left:679px;top:171.5px;" width="8" height="8" viewBox="0 0 8 8"><path d="M0.5 5V0.5H5" fill="none" stroke="#7a7a7a" stroke-width="1"/><path d="M2.6 2.6L6.6 6.6" stroke="#7a7a7a" stroke-width="1"/><path d="M7.6 3.6V7.6H3.6Z" fill="#7a7a7a"/></svg>
<div class="b" style="left:691.7px;top:80px;width:1px;height:100px;background:#dadada;"></div>
<div class="b" style="left:695.5px;top:89.5px;width:144px;height:26px;background:#fff;box-sizing:border-box;border:1px solid #c6c6c6;"></div>
<span class="t" style="top:96.13px;font-family:'Liberation Sans',sans-serif;font-size:14.5px;color:#3f3f3f;left:700.60px;transform:scaleX(0.9381);">General</span>
<svg class="b" style="left:828.7px;top:100.5px;" width="6" height="4" viewBox="0 0 6 4"><path d="M0 0H5.6L2.8 3.1Z" fill="#5e5e5e"/></svg>
<span class="t" style="top:128.57px;font-family:'Liberation Sans',sans-serif;font-size:20px;color:#3f3f3f;left:703.50px;transform:scaleX(0.9438);">$</span>
<svg class="b" style="left:724px;top:138px;" width="6" height="4" viewBox="0 0 6 4"><path d="M0 0H5.6L2.8 3.1Z" fill="#5e5e5e"/></svg>
<span class="t" style="top:128.57px;font-family:'Liberation Sans',sans-serif;font-size:20px;color:#3f3f3f;left:737.50px;transform:scaleX(0.8990);">%</span>
<svg class="b" style="left:765px;top:131px;" width="11" height="14" viewBox="0 0 11 14"><path d="M5.6 1.4a3.7 3.7 0 0 1 3.8 4c0 3.6-2.7 6.4-7.4 7.6l-.5-1.1c2.4-1 3.6-2.3 3.8-3.8a3.4 3.4 0 0 1-3.4-3.3a3.6 3.6 0 0 1 3.7-3.4z" fill="#505050"/></svg>
<div class="b" style="left:785.8px;top:127.5px;width:1px;height:23.0px;background:#dadada;"></div>
<svg class="b" style="left:793px;top:129px;" width="19" height="19" viewBox="0 0 19 19"><path d="M0.2 4.8L3.8 1.4L4.9 2.5L3.5 3.9H7.6V5.7H3.5L4.9 7.1L3.8 8.2Z" fill="#4480c4"/>
<text x="7.6" y="8.4" font-family="Liberation Sans, sans-serif" font-size="9.8" fill="#444" stroke="#444" stroke-width="0.25" textLength="10.4" lengthAdjust="spacingAndGlyphs">.0</text>
<text x="2.8" y="17.6" font-family="Liberation Sans, sans-serif" font-size="9.8" fill="#444" stroke="#444" stroke-width="0.25" textLength="15.4" lengthAdjust="spacingAndGlyphs">.00</text></svg>
<svg class="b" style="left:817.5px;top:129px;" width="19" height="19" viewBox="0 0 19 19"><text x="2.8" y="8.4" font-family="Liberation Sans, sans-serif" font-size="9.8" fill="#444" stroke="#444" stroke-width="0.25" textLength="15.4" lengthAdjust="spacingAndGlyphs">.00</text>
<path d="M7.8 14L4.2 10.6L3.1 11.7L4.5 13.1H0.4V14.9H4.5L3.1 16.3L4.2 17.4Z" fill="#4480c4"/>
<text x="7.6" y="17.6" font-family="Liberation Sans, sans-serif" font-size="9.8" fill="#444" stroke="#444" stroke-width="0.25" textLength="10.4" lengthAdjust="spacingAndGlyphs">.0</text></svg>
<span class="t" style="top:167.73px;font-family:'Liberation Sans',sans-serif;font-size:14.5px;color:#4a4a4a;left:734.50px;transform:scaleX(0.9015);">Number</span>
<svg class="b" style="left:829px;top:171.5px;" width="8" height="8" viewBox="0 0 8 8"><path d="M0.5 5V0.5H5" fill="none" stroke="#7a7a7a" stroke-width="1"/><path d="M2.6 2.6L6.6 6.6" stroke="#7a7a7a" stroke-width="1"/><path d="M7.6 3.6V7.6H3.6Z" fill="#7a7a7a"/></svg>
<div class="b" style="left:842.2px;top:80px;width:1px;height:100px;background:#dadada;"></div>
<svg class="b" style="left:873px;top:83px;" width="38" height="38" viewBox="0 0 38 38"><rect x="1.1" y="1.1" width="32.6" height="26.4" fill="#fff"/>
<path d="M1.1 7.7H33.7M1.1 14.5H33.7M1.1 21H33.7M11.5 1.1V27.5M23.3 1.1V27.5" fill="none" stroke="#cfcfcf" stroke-width="1"/>
<rect x="1.1" y="1.1" width="32.6" height="26.4" fill="none" stroke="#a3a3a3" stroke-width="1"/>
<rect x="11.5" y="1.6" width="6.2" height="5.6" fill="#d9603b"/><rect x="11.5" y="8.2" width="10.3" height="5.8" fill="#4480c4"/><rect x="11.5" y="15" width="8" height="5.5" fill="#d9603b"/><rect x="11.5" y="21.5" width="4.2" height="5.5" fill="#4480c4"/>
<rect x="20" y="23.3" width="16.8" height="13.4" fill="#fff" stroke="#8a8a8a" stroke-width="1"/>
<path d="M24.4 28.4H32.4M24.4 31.8H32.4M30.8 26L26.2 34.2" stroke="#3f3f3f" stroke-width="1" fill="none"/></svg>
<span class="t" style="top:126.23px;font-family:'Liberation Sans',sans-serif;font-size:14.5px;color:#3f3f3f;left:853.00px;transform:scaleX(1.0198);">Conditional</span>
<span class="t" style="top:145.73px;font-family:'Liberation Sans',sans-serif;font-size:14.5px;color:#3f3f3f;left:849.00px;transform:scaleX(1.0171);">Formatting</span>
<svg class="b" style="left:925.5px;top:150px;" width="6" height="4" viewBox="0 0 6 4"><path d="M0 0H5.6L2.8 3.1Z" fill="#5e5e5e"/></svg>
<svg class="b" style="left:951px;top:85px;" width="40" height="38" viewBox="0 0 40 38"><rect x="1.2" y="1.4" width="33.4" height="26.8" fill="#fff"/><rect x="9.2" y="8" width="25.4" height="20.2" fill="#bdd3ee"/>
<path d="M1.2 8H34.6M1.2 14.8H34.6M1.2 21.5H34.6M9.2 1.4V28.2M17.8 1.4V28.2M26 1.4V28.2" fill="none" stroke="#c3cbd6" stroke-width="1"/>
<rect x="1.2" y="1.4" width="33.4" height="26.8" fill="none" stroke="#a3a3a3" stroke-width="1"/>
<g transform="translate(-951 -85)"><path d="M988 93.6L988.7 98.9L979.9 111L975.9 107.9Z" fill="#7a7a7a"/><path d="M974.6 109.6L978.4 112.6" stroke="#f3f3f3" stroke-width="0.9"/><path d="M975.6 108.4Q968.4 108.6 966.2 113.8Q964.4 118.4 960.4 120.8Q971.4 120.8 976.4 117.2Q979.8 114.6 979.8 111.6Z" fill="#4480c4"/><ellipse cx="973.6" cy="114.3" rx="2.5" ry="1.8" transform="rotate(-35 973.6 114.3)" fill="#fff"/></g></svg>
<span class="t" style="top:126.23px;font-family:'Liberation Sans',sans-serif;font-size:14.5px;color:#3f3f3f;left:936.00px;transform:scaleX(0.9806);">Format as</span>
<span class="t" style="top:145.73px;font-family:'Liberation Sans',sans-serif;font-size:14.5px;color:#3f3f3f;left:946.50px;transform:scaleX(0.9518);">Table</span>
<svg class="b" style="left:984px;top:150px;" width="6" height="4" viewBox="0 0 6 4"><path d="M0 0H5.6L2.8 3.1Z" fill="#5e5e5e"/></svg>
<svg class="b" style="left:1010px;top:83px;" width="40" height="38" viewBox="0 0 40 38"><rect x="1.2" y="1.1" width="33.4" height="26.4" fill="#fff"/><rect x="7.4" y="7.3" width="21" height="14.1" fill="#bdd3ee"/>
<path d="M1.2 7.3H34.6M1.2 21.4H34.6M7.4 1.1V27.5M28.4 1.1V27.5" fill="none" stroke="#c3c7cc" stroke-width="1"/>
<rect x="1.2" y="1.1" width="33.4" height="26.4" fill="none" stroke="#a3a3a3" stroke-width="1"/>
<g transform="translate(-950.6 -85.2)"><path d="M988 93.6L988.7 98.9L979.9 111L975.9 107.9Z" fill="#7a7a7a"/><path d="M974.6 109.6L978.4 112.6" stroke="#f3f3f3" stroke-width="0.9"/><path d="M975.6 108.4Q968.4 108.6 966.2 113.8Q964.4 118.4 960.4 120.8Q971.4 120.8 976.4 117.2Q979.8 114.6 979.8 111.6Z" fill="#4480c4"/><ellipse cx="973.6" cy="114.3" rx="2.5" ry="1.8" transform="rotate(-35 973.6 114.3)" fill="#fff"/></g></svg>
<span class="t" style="top:126.23px;font-family:'Liberation Sans',sans-serif;font-size:14.5px;color:#3f3f3f;left:1017.00px;transform:scaleX(0.9006);">Cell</span>
<span class="t" style="top:145.73px;font-family:'Liberation Sans',sans-serif;font-size:14.5px;color:#3f3f3f;left:1004.50px;transform:scaleX(0.9241);">Styles</span>
<svg class="b" style="left:1046.5px;top:150px;" width="6" height="4" viewBox="0 0 6 4"><path d="M0 0H5.6L2.8 3.1Z" fill="#5e5e5e"/></svg>
<span class="t" style="top:167.73px;font-family:'Liberation Sans',sans-serif;font-size:14.5px;color:#4a4a4a;left:934.50px;transform:scaleX(0.7975);">Styles</span>
<div class="b" style="left:1057.7px;top:80px;width:1px;height:100px;background:#dadada;"></div>
<svg class="b" style="left:1067px;top:83px;" width="38" height="38" viewBox="0 0 38 38"><path d="M3.5 1.8H21.7V7.4H3.5ZM12.6 1.8V7.4" fill="#fff" stroke="#8a8a8a"/>
<path d="M17.5 11.7H36V18.4H17.5ZM26.8 11.7V18.4" fill="#bdd3ee" stroke="#8a8a8a"/>
<path d="M3.5 22.8H21.7V35.6H3.5ZM12.6 22.8V35.6M3.5 29.2H21.7" fill="#fff" stroke="#8a8a8a"/>
<path d="M2.4 15H13.6" stroke="#4480c4" stroke-width="2.3"/><path d="M7 9.8L1.8 15L7 20.2" fill="none" stroke="#4480c4" stroke-width="2.3"/></svg>
<span class="t" style="top:126.23px;font-family:'Liberation Sans',sans-serif;font-size:14.5px;color:#3f3f3f;left:1068.30px;transform:scaleX(0.9706);">Insert</span>
<svg class="b" style="left:1083.5px;top:150px;" width="6" height="4" viewBox="0 0 6 4"><path d="M0 0H5.6L2.8 3.1Z" fill="#5e5e5e"/></svg>
<svg class="b" style="left:1117px;top:83px;" width="38" height="38" viewBox="0 0 38 38"><path d="M1.5 1.5H19.5V7H1.5ZM10.5 1.5V7" fill="#fff" stroke="#8a8a8a"/>
<path d="M8 11.5H17.4L21 14.8L17.4 18H8ZM16.6 11.5V18" fill="#bdd3ee" stroke="#8a8a8a"/>
<path d="M1.5 22.5H19.5V35.5H1.5ZM10.5 22.5V35.5M1.5 29H19.5" fill="#fff" stroke="#8a8a8a"/>
<path d="M18.6 8.6Q26 14 34.6 24.2M34.6 8.6Q26 16 18.6 24.2" fill="none" stroke="#d9603b" stroke-width="2.8"/></svg>
<span class="t" style="top:126.23px;font-family:'Liberation Sans',sans-serif;font-size:14.5px;color:#3f3f3f;left:1113.50px;transform:scaleX(0.9542);">Delete</span>
<svg class="b" style="left:1131px;top:150px;" width="6" height="4" viewBox="0 0 6 4"><path d="M0 0H5.6L2.8 3.1Z" fill="#5e5e5e"/></svg>
<svg class="b" style="left:1164px;top:82px;" width="38" height="39" viewBox="0 0 38 39"><path d="M1.8 1.4V7.6M29.4 1.4V7.6" stroke="#4480c4" stroke-width="1"/><path d="M5 4.5H26.2" stroke="#4480c4" stroke-width="1.8"/><path d="M8.4 1.4L4.6 4.5L8.4 7.6M22.8 1.4L26.6 4.5L22.8 7.6" fill="none" stroke="#4480c4" stroke-width="1.7"/>
<rect x="2" y="10" width="32.5" height="23.5" fill="#fff"/><rect x="10.3" y="15.4" width="9.4" height="11.8" fill="#4480c4"/>
<path d="M2 10H34.5V33.5H2ZM2 15.5H34.5M2 27H34.5M10.5 10V33.5M19.5 10V33.5M27 10V33.5" fill="none" stroke="#c4c4c4"/>
<path d="M2 10H34.5V33.5H2Z" fill="none" stroke="#a8a8a8"/>
<path d="M2 33.5V37H11L13 35H20L18 37.4H28L30 33.5" fill="#fff" stroke="#8a8a8a"/></svg>
<span class="t" style="top:126.23px;font-family:'Liberation Sans',sans-serif;font-size:14.5px;color:#3f3f3f;left:1159.50px;">Format</span>
<svg class="b" style="left:1180.5px;top:150px;" width="6" height="4" viewBox="0 0 6 4"><path d="M0 0H5.6L2.8 3.1Z" fill="#5e5e5e"/></svg>
<span class="t" style="top:167.73px;font-family:'Liberation Sans',sans-serif;font-size:14.5px;color:#4a4a4a;left:1121.50px;transform:scaleX(0.8221);">Cells</span>
<div class="b" style="left:1211.2px;top:80px;width:1px;height:100px;background:#dadada;"></div>
<svg class="b" style="left:1219.6px;top:82px;" width="17" height="18" viewBox="0 0 17 18"><path d="M14.6 5V1.8H1.6L8.2 9L1.6 16.2H14.8V13" fill="none" stroke="#3f3f3f" stroke-width="1.7" stroke-linejoin="miter"/></svg>
<span class="t" style="top:84.73px;font-family:'Liberation Sans',sans-serif;font-size:14.5px;color:#3f3f3f;left:1240.50px;transform:scaleX(1.0058);">AutoSum</span>
<svg class="b" style="left:1311px;top:90.5px;" width="6" height="4" viewBox="0 0 6 4"><path d="M0 0H5.6L2.8 3.1Z" fill="#5e5e5e"/></svg>
<svg class="b" style="left:1218px;top:106px;" width="20" height="21" viewBox="0 0 20 21"><rect x="1.5" y="2.4" width="16" height="17" fill="#fff" stroke="#7a7a7a"/><rect x="1" y="1" width="17" height="2.2" fill="#7f7f7f"/>
<path d="M9.5 6.2V15" stroke="#4480c4" stroke-width="2.8"/><path d="M4.8 10.4L9.5 15.2L14.2 10.4" fill="none" stroke="#4480c4" stroke-width="2.8"/></svg>
<span class="t" style="top:110.23px;font-family:'Liberation Sans',sans-serif;font-size:14.5px;color:#3f3f3f;left:1241.00px;transform:scaleX(0.8634);">Fill</span>
<svg class="b" style="left:1262.5px;top:115px;" width="6" height="4" viewBox="0 0 6 4"><path d="M0 0H5.6L2.8 3.1Z" fill="#5e5e5e"/></svg>
<svg class="b" style="left:1218px;top:133px;" width="20" height="19" viewBox="0 0 20 19"><path d="M1.6 11.4L12.6 1.6Q13.6 0.8 14.4 1.8L18 6.4Q18.6 7.4 17.8 8.2L6.8 17.6Z" fill="#e8758a"/><path d="M1.6 11.4L4 9.2L9 15.6L6.8 17.6Q6 18.2 5.2 17.4L1.4 12.8Q0.9 12 1.6 11.4Z" fill="#f3a3b1"/></svg>
<span class="t" style="top:135.73px;font-family:'Liberation Sans',sans-serif;font-size:14.5px;color:#3f3f3f;left:1240.50px;transform:scaleX(0.8945);">Clear</span>
<svg class="b" style="left:1277.5px;top:141px;" width="6" height="4" viewBox="0 0 6 4"><path d="M0 0H5.6L2.8 3.1Z" fill="#5e5e5e"/></svg>
<span class="t" style="top:82.69px;font-family:'Liberation Sans',sans-serif;font-size:17.5px;color:#4480c4;left:1327.00px;transform:scaleX(1.1551);-webkit-text-stroke:0.4px #4480c4;">A</span>
<span class="t" style="top:100.19px;font-family:'Liberation Sans',sans-serif;font-size:17.5px;color:#a35fc2;left:1328.00px;transform:scaleX(1.1212);-webkit-text-stroke:0.4px #a35fc2;">Z</span>
<svg class="b" style="left:1343px;top:91px;" width="20" height="20" viewBox="0 0 20 20"><path d="M0.4 1H19L11.4 8.6V18.4H8V8.6Z" fill="#7a7a7a"/></svg>
<span class="t" style="top:126.23px;font-family:'Liberation Sans',sans-serif;font-size:14.5px;color:#3f3f3f;left:1323.50px;transform:scaleX(1.0547);">Sort &amp;</span>
<span class="t" style="top:145.73px;font-family:'Liberation Sans',sans-serif;font-size:14.5px;color:#3f3f3f;left:1324.00px;transform:scaleX(0.9307);">Filter</span>
<svg class="b" style="left:1360px;top:150px;" width="6" height="4" viewBox="0 0 6 4"><path d="M0 0H5.6L2.8 3.1Z" fill="#5e5e5e"/></svg>
<svg class="b" style="left:1376px;top:83px;" width="38" height="37" viewBox="0 0 38 37"><circle cx="22.8" cy="13.9" r="11.3" fill="#fff" stroke="#4480c4" stroke-width="2.7"/><path d="M14 23L4.2 32.6" stroke="#4480c4" stroke-width="4.4" stroke-linecap="round"/></svg>
<span class="t" style="top:126.23px;font-family:'Liberation Sans',sans-serif;font-size:14.5px;color:#3f3f3f;left:1373.00px;transform:scaleX(1.0257);">Find &amp;</span>
<span class="t" style="top:145.73px;font-family:'Liberation Sans',sans-serif;font-size:14.5px;color:#3f3f3f;left:1370.50px;transform:scaleX(0.9426);">Select</span>
<svg class="b" style="left:1413px;top:150px;" width="6" height="4" viewBox="0 0 6 4"><path d="M0 0H5.6L2.8 3.1Z" fill="#5e5e5e"/></svg>
<span class="t" style="top:167.73px;font-family:'Liberation Sans',sans-serif;font-size:14.5px;color:#4a4a4a;left:1299.00px;transform:scaleX(0.8908);">Editing</span>
<div class="b" style="left:1423.7px;top:80px;width:1px;height:100px;background:#dadada;"></div>
</body></html>
